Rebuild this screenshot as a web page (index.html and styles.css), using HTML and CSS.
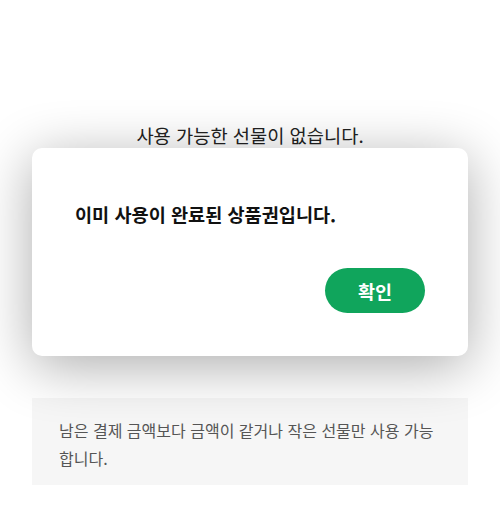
FILE: index.html
```html
<!DOCTYPE html>
<html lang="ko">
<head>
    <meta charset="UTF-8">
    <meta name="viewport" content="width=device-width, initial-scale=1.0">
    <title>선물 사용</title>
    <link rel="stylesheet" href="styles.css">
</head>
<body>
    <div class="page">
        <p class="empty-text">사용 가능한 선물이 없습니다.</p>
        <div class="notice">
            남은 결제 금액보다 금액이 같거나 작은 선물만 사용 가능 합니다.
        </div>
    </div>

    <div class="dialog">
        <p class="dialog-message">이미 사용이 완료된 상품권입니다.</p>
        <div class="dialog-actions">
            <button type="button" class="btn-confirm">확인</button>
        </div>
    </div>
</body>
</html>
```

FILE: styles.css
```css
body {
    margin: 0;
    background: #fff;
    font-family: "Noto Sans CJK KR", "Noto Sans", sans-serif;
    color: #222;
}
.page {
    padding: 122px 32px 0;
}
.empty-text {
    margin: 0;
    font-size: 18.7px;
    line-height: 26px;
    text-align: center;
    color: #222;
}
.notice {
    margin-top: 250px;
    padding: 18px 27px 16px;
    background: #f6f6f6;
    font-size: 16px;
    line-height: 28px;
    color: #555;
    height: 87px;
    box-sizing: border-box;
}
.dialog {
    position: absolute;
    top: 148px;
    left: 32px;
    width: 436px;
    height: 208px;
    box-sizing: border-box;
    padding: 53px 43px 43px;
    background: #fff;
    border-radius: 10px;
    box-shadow: 0 10px 55px rgba(0, 0, 0, 0.33);
    display: flex;
    flex-direction: column;
    justify-content: space-between;
}
.dialog-message {
    margin: 0;
    font-size: 18.6px;
    line-height: 26px;
    font-weight: 700;
    color: #111;
}
.dialog-actions {
    display: flex;
    justify-content: flex-end;
}
.btn-confirm {
    width: 100px;
    height: 45px;
    border: none;
    border-radius: 23px;
    background: #10a55c;
    color: #fff;
    font-family: inherit;
    font-size: 18.5px;
    font-weight: 700;
    cursor: pointer;
}
```
